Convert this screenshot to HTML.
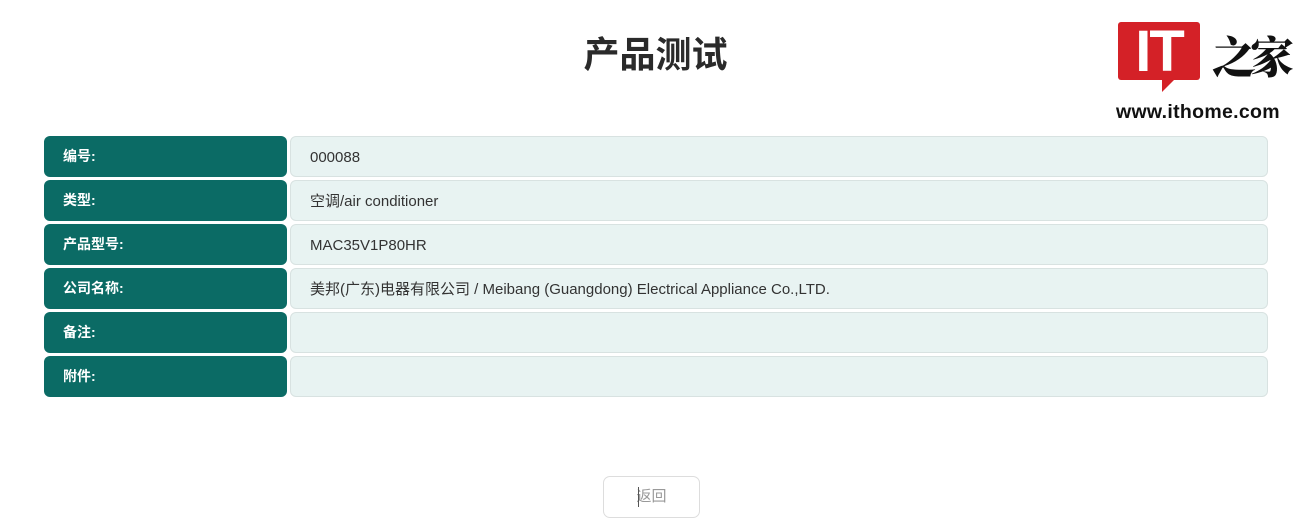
<!DOCTYPE html>
<html><head><meta charset="utf-8"><style>
body{margin:0;width:1311px;height:530px;background:#fff;position:relative;font-family:"Liberation Sans","Noto Sans CJK SC",sans-serif;overflow:hidden}
h1{position:absolute;left:0;width:1311px;top:27px;margin:0;text-align:center;font-size:36px;font-weight:bold;color:#2a2a2a;line-height:50px;font-family:"Noto Sans CJK SC",sans-serif}
.row{position:absolute;left:44px;height:41px}
.lab{position:absolute;left:0;width:243px;height:41px;background:#0b6b65;border-radius:6px;color:#fff;font-size:14px;font-weight:bold;line-height:41px;text-indent:19px}
.val{position:absolute;left:246px;width:976px;height:39px;background:#e8f3f2;border:1px solid #d8e2e1;border-radius:6px;color:#333;font-size:15px;line-height:41px;text-indent:19px}
.btn{position:absolute;left:603px;top:476px;width:95px;height:40px;border:1px solid #ddd;border-radius:7px;color:#999;font-size:15px;text-align:center;line-height:40px}
.cur{position:absolute;left:34px;top:10px;width:1px;height:20px;background:#555}
.logo{position:absolute;left:1118px;top:22px;width:82px;height:58px;background:#d42127;border-radius:3px}
.tail{position:absolute;left:1162px;top:78px;width:0;height:0;border-right:14px solid transparent;border-top:14px solid #d42127}
.it{position:absolute;left:1118px;top:23px;width:82px;height:58px;color:#fff;font-weight:bold;font-size:58px;line-height:58px;text-align:center;letter-spacing:-2px}
.zj{position:absolute;left:1212px;top:22px;font-family:"Noto Serif CJK SC",serif;font-size:44px;font-weight:900;color:#111;line-height:64px;letter-spacing:-6px}
.url{position:absolute;left:1116px;top:101px;font-size:19.5px;font-weight:bold;color:#111;letter-spacing:0.3px}
</style></head><body>
<h1>产品测试</h1>
<div class="logo"></div><div class="tail"></div><div class="it">IT</div>
<div class="zj">之家</div>
<div class="url">www.ithome.com</div>
<div class="row" style="top:136px"><div class="lab">编号:</div><div class="val">000088</div></div>
<div class="row" style="top:180px"><div class="lab">类型:</div><div class="val">空调/air conditioner</div></div>
<div class="row" style="top:224px"><div class="lab">产品型号:</div><div class="val">MAC35V1P80HR</div></div>
<div class="row" style="top:268px"><div class="lab">公司名称:</div><div class="val">美邦(广东)电器有限公司 / Meibang (Guangdong) Electrical Appliance Co.,LTD.</div></div>
<div class="row" style="top:312px"><div class="lab">备注:</div><div class="val"></div></div>
<div class="row" style="top:356px"><div class="lab">附件:</div><div class="val"></div></div>
<div class="btn"><div class="cur"></div>返回</div>
</body></html>
